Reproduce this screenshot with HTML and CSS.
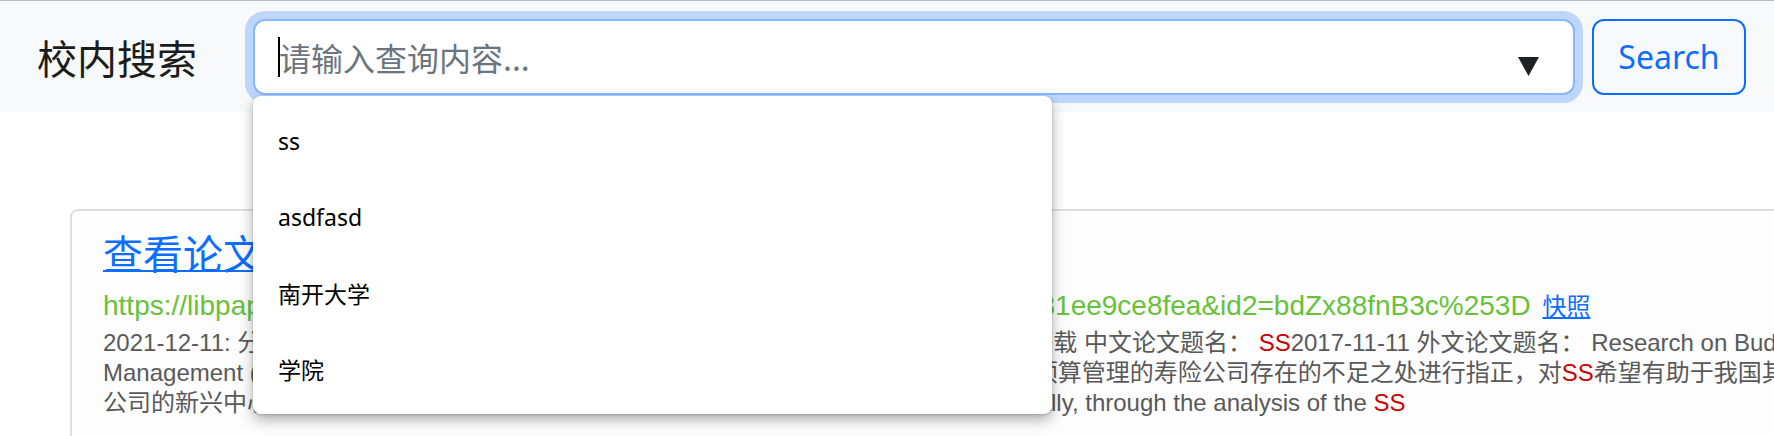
FILE: index.html
```html
<!DOCTYPE html>
<html lang="zh-CN">
<head>
<meta charset="utf-8">
<title>校内搜索</title>
<link rel="stylesheet" href="styles.css">
</head>
<body>
<header class="navbar">
  <span class="brand">校内搜索</span>
  <form class="search">
    <div class="field">
      <input class="query" type="text" placeholder="请输入查询内容...">
      <span class="caret"></span>
      <svg class="list-arrow" viewBox="0 0 21 19" aria-hidden="true"><polygon points="0,0 21,0 10.5,19" fill="#202124"/></svg>
      <ul class="suggest">
        <li>ss</li>
        <li>asdfasd</li>
        <li>南开大学</li>
        <li>学院</li>
      </ul>
    </div>
    <button class="btn-search" type="button">Search</button>
  </form>
</header>
<main class="results">
  <div class="card">
    <div class="title-row"><a class="title" href="#">查看论文：寿险公司预算管理研究</a></div>
    <div class="url">https://libpaper.nankai.edu.cn/detail?id=5e8a4d02b7e6a9d13e4b0a7d9254f31ee9ce8fea&amp;id2=bdZx88fnB3c%253D <a class="snap" href="#">快照</a></div>
    <p class="abstract">2021-12-11: 分类号为经济管理类论文本文已经作者授权在图书馆网站上全文发布欢迎读下载 中文论文题名： <em>SS</em>2017-11-11 外文论文题名： Research on Budget Management of Life Insurance Company<br>Management (以某寿险公司全面预算管理为例研究)摘要：本文首先对某寿险公司的全面预算管理的寿险公司存在的不足之处进行指正，对<em>SS</em>希望有助于我国其他寿险公司的预算管理<br>公司的新兴中心，预算管理的作用日益重要，本文对预算管理的相关理论进行了研究. Finally, through the analysis of the <em>SS</em></p>
  </div>
</main>
</body>
</html>
```

FILE: styles.css
```css
* { box-sizing: border-box; }

html, body {
  margin: 0;
  overflow: hidden;
}

body {
  font-family: "Liberation Sans", "Noto Sans CJK SC", sans-serif;
  background: #ffffff;
}

.navbar {
  display: flex;
  align-items: center;
  height: 112px;
  border-top: 1px solid #bdbdbd;
  background: #f8f9fa;
  padding-left: 37px;
}

.brand {
  width: 216px;
  font-family: "Noto Sans CJK SC", sans-serif;
  font-size: 40px;
  color: #1c1c1c;
}

.search {
  display: flex;
  gap: 17px;
  margin: 0;
}

.field {
  position: relative;
  width: 1322px;
  height: 76px;
}

.query {
  width: 100%;
  height: 100%;
  border: 2px solid #86b7fe;
  border-radius: 12px;
  box-shadow: 0 0 0 8px rgba(13, 110, 253, 0.25);
  padding: 0 24px;
  font-family: "Noto Sans CJK SC", sans-serif;
  font-size: 32px;
  color: #212529;
  background: #ffffff;
  outline: none;
}

.query::placeholder {
  color: #6c757d;
}

.caret {
  position: absolute;
  left: 25px;
  top: 18px;
  width: 2px;
  height: 40px;
  background: #000000;
}

.list-arrow {
  position: absolute;
  right: 36px;
  top: 38px;
  width: 21px;
  height: 19px;
}

.suggest {
  position: absolute;
  top: 77px;
  left: 0;
  z-index: 10;
  width: 799px;
  margin: 0;
  padding: 7px 0;
  list-style: none;
  background: #ffffff;
  border-radius: 8px;
  box-shadow: 0 6px 14px rgba(0, 0, 0, 0.3), 0 1px 3px rgba(0, 0, 0, 0.18);
}

.suggest li {
  display: flex;
  align-items: center;
  height: 76px;
  padding-left: 25px;
  font-family: "Noto Sans", "Noto Sans CJK SC", sans-serif;
  font-size: 23px;
  color: #000000;
}

.btn-search {
  width: 154px;
  height: 76px;
  padding: 0;
  border: 2px solid #0d6efd;
  border-radius: 12px;
  background: transparent;
  color: #0d6efd;
  font-family: "Noto Sans", sans-serif;
  font-size: 32px;
}

.results {
  padding: 97px 0 0 70px;
}

.card {
  width: 1760px;
  border: 2px solid #dedede;
  border-radius: 8px;
  background: #fdfdfd;
  padding: 16px 0 30px 31px;
}

.title-row {
  font-size: 40px;
  line-height: 56px;
  margin-bottom: 5px;
}

.title {
  color: #0d6efd;
  text-decoration: underline;
  text-decoration-thickness: 2px;
}

.url {
  font-size: 28px;
  line-height: 36px;
  color: #67c23a;
  margin-bottom: 3px;
  white-space: nowrap;
}

.snap {
  margin-left: 4px;
  font-size: 24px;
  color: #0d6efd;
}

.abstract {
  margin: 0;
  font-size: 24px;
  line-height: 30px;
  color: #595959;
  white-space: nowrap;
}

.abstract em {
  font-style: normal;
  color: #cc0000;
}
```
